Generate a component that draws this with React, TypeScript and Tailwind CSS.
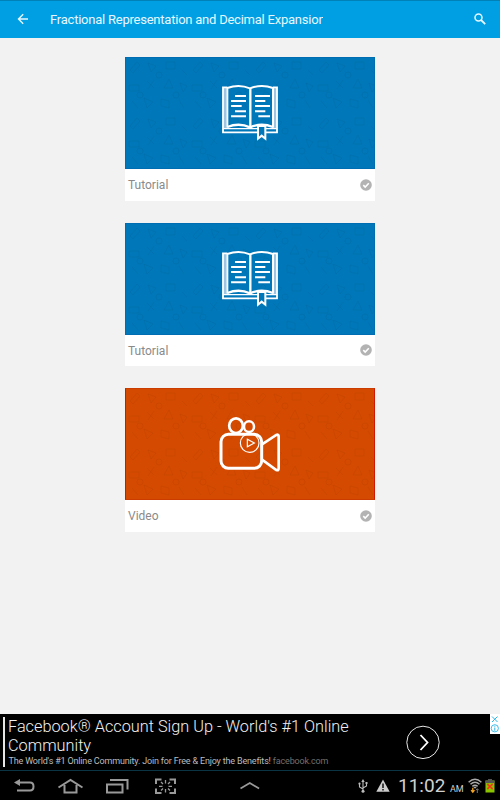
import { ReactNode } from "react";

type LessonKind = "tutorial" | "video";

interface Lesson {
  title: string;
  kind: LessonKind;
}

const lessons: Lesson[] = [
  { title: "Tutorial", kind: "tutorial" },
  { title: "Tutorial", kind: "tutorial" },
  { title: "Video", kind: "video" },
];

function BookIcon() {
  return (
    <svg viewBox="0 0 300 258" className="relative h-[86px] w-[100px]" fill="none" stroke="#fff">
      <path d="M75 53V176M225 53V176" stroke="#9dc6e2" strokeWidth="10" />
      <path d="M82 52H69V187H231V52H219" strokeWidth="5.5" />
      <path d="M69 176H231" strokeWidth="4" />
      <path d="M82 173V54Q117 41 150 55Q184 41 219 54V173" strokeWidth="6" />
      <path d="M82 171Q117 157 150 172Q184 157 219 171" strokeWidth="7" />
      <path d="M151 55V175" strokeWidth="7" />
      <path
        d="M105 78H138M93 93H138M93 108H125M105 124H138M93 139H138M165 78H210M165 93H196M165 108H210M165 124H196M175 139H210"
        strokeWidth="6"
      />
      <path d="M174 168H196V206L185 197L174 206Z" fill="#0077b8" strokeWidth="6" />
    </svg>
  );
}

function CameraIcon() {
  return (
    <svg viewBox="0 0 300 264" className="relative h-[88px] w-[100px]" fill="none" stroke="#fff">
      <ellipse cx="108" cy="77" rx="20.5" ry="22" strokeWidth="8" />
      <ellipse cx="147" cy="80" rx="15" ry="16" strokeWidth="7.5" />
      <rect x="63" y="103" width="122" height="102" rx="22" strokeWidth="9" />
      <path d="M186 133L229 105Q236 102 236 109V205Q236 213 229 210L186 179" strokeWidth="8" />
      <circle cx="149" cy="129" r="28" strokeWidth="3.5" />
      <path d="M142 118V140L163 129Z" strokeWidth="3.5" />
    </svg>
  );
}

// Faint school doodles behind the cover icon
function Doodles({ id }: { id: string }) {
  return (
    <svg className="absolute inset-0 h-full w-full" fill="none" stroke="#000" strokeOpacity="0.04">
      <defs>
        <pattern id={id} width="63" height="56" patternUnits="userSpaceOnUse">
          <path d="M4 12l7-8 3 3-7 8zM22 5l8 3-5 6zM40 4h9v7h-9zM56 12l5 5M3 27h10v6H3zM21 23l7 7M28 22l-6 9M38 30l5-9 4 9zM54 25l7 3-4 6zM6 43l6 7M18 40l9 4-6 6zM35 41l8 2v7l-8-2zM53 42l5 8" />
          <circle cx="33" cy="17" r="3" />
          <circle cx="14" cy="37" r="3" />
          <circle cx="50" cy="37" r="3" />
        </pattern>
      </defs>
      <rect width="100%" height="100%" fill={`url(#${id})`} stroke="none" />
    </svg>
  );
}

function LessonCard({ lesson, id }: { lesson: Lesson; id: string }) {
  const isVideo = lesson.kind === "video";
  return (
    <article className="w-[250px] bg-white">
      <div
        className={`relative flex h-28 items-center justify-center border ${
          isVideo ? "border-x-[#d01800] border-y-[#cb3c00] bg-[#d44a00]" : "border-[#006db2] bg-[#0077b8]"
        }`}
      >
        <Doodles id={id} />
        {isVideo ? <CameraIcon /> : <BookIcon />}
      </div>
      <div className="flex h-[31.5px] items-center justify-between pr-[3.5px] pl-[3px]">
        <span className="pt-px font-[Roboto,sans-serif] text-xs leading-4 text-[#8a8a8a]">{lesson.title}</span>
        <svg viewBox="0 0 12 12" className="size-3">
          <circle cx="6" cy="6" r="5.8" fill="#b3b3b3" />
          <path d="M3.3 6.1l1.9 1.9 3.6-3.7" fill="none" stroke="#fff" strokeWidth="1.6" />
        </svg>
      </div>
    </article>
  );
}

function NavIcon({ className, children }: { className?: string; children: ReactNode }) {
  return (
    <svg viewBox="0 0 26 18" className={`h-[18px] w-[26px] ${className ?? ""}`} fill="none" stroke="#999" strokeWidth="2">
      {children}
    </svg>
  );
}

function AdBanner() {
  return (
    <section className="flex h-14 bg-black font-[Roboto,sans-serif]">
      <div className="mt-[3px] ml-[3px] h-[50px] w-[2px] bg-[#e5e5e5]" />
      <div className="w-[380px] pt-[3px] pl-[3px] whitespace-nowrap">
        <h2 className="text-[16.3px] leading-[19px] font-light text-[#f0f0f0]">
          Facebook® Account Sign Up - World's #1 Online
          <br />
          Community
        </h2>
        <p className="pl-[0.5px] text-[9px] leading-[12px] tracking-[-0.17px] text-[#bdbdbd]">
          The World's #1 Online Community. Join for Free &amp; Enjoy the Benefits!{" "}
          <span className="text-[#707070]">facebook.com</span>
        </p>
      </div>
      <svg viewBox="0 0 36 36" className="mt-[10px] ml-[17px] size-9 shrink-0 translate-x-[3px]" fill="none" stroke="#fff">
        <circle cx="18" cy="18.4" r="16.2" strokeWidth="0.9" />
        <path d="M15.5 11l7 7.5-7 7.5" strokeWidth="1.8" />
      </svg>
      <svg viewBox="0 0 10 20" className="ml-auto h-5 w-[10px] bg-white" fill="none" stroke="#29b6e6">
        <path d="M2 2.5l5.5 5.5M7.5 2.5L2 8" />
        <circle cx="4.8" cy="14.3" r="3.6" strokeWidth="0.9" />
        <path d="M4.8 13.5v3.3M4.8 11.8v.9" />
      </svg>
    </section>
  );
}

function SystemBar() {
  return (
    <footer className="flex h-[30px] items-center border-t border-[#0a3443] bg-black pr-[5px] pl-[11px]">
      <NavIcon>
        <path d="M7 5.5h12q3.5 0 3.5 4t-3.5 4H6" />
        <path d="M3 5.5l6-3.5v7z" fill="#999" stroke="none" />
      </NavIcon>
      <NavIcon className="ml-5">
        <path d="M1.5 10.5L13.5 3l12 7.5M7.5 8v7.5h12V8" />
      </NavIcon>
      <NavIcon className="ml-[22px]">
        <path d="M2 7.5h15.5v8H2zM5 3h17.5v9.5" />
      </NavIcon>
      <NavIcon className="ml-[23px]">
        <path d="M2 7V2.5h5.5M15.5 2.5H21V7M21 11.5V16h-5.5M7.5 16H2v-4.5" />
        <path d="M11.5 3v3.5M11.5 12v3.5M5 9.3h3.5M14.5 9.3H18M7 5l2 2M16 5l-2 2M7 13.5l2-2M16 13.5l-2-2" strokeWidth="1.3" />
      </NavIcon>
      <NavIcon className="ml-[57px]">
        <path d="M3.5 11.5l9.3-5.5 9.3 5.5" strokeWidth="1.7" />
      </NavIcon>

      <div className="ml-auto flex items-center text-[#d0d0d0]">
        <svg viewBox="0 0 10 14" className="h-[14px] w-[10px]" fill="none" stroke="#bbb">
          <path d="M5 2v10M1.5 5v3L5 10M8.5 4.5V7L5 9" strokeWidth="1.1" />
          <path d="M3.3 3L5 0l1.7 3zM7.5 3h2v2h-2z" fill="#bbb" stroke="none" />
          <circle cx="1.5" cy="4.7" r="1.1" fill="#bbb" stroke="none" />
          <circle cx="5" cy="12.2" r="1.5" fill="#bbb" stroke="none" />
        </svg>
        <svg viewBox="0 0 14 13" className="ml-2 h-[13px] w-[14px]">
          <path d="M7 .5L13.7 12.7H.3z" fill="#ccc" />
          <path d="M7 4.5V9M7 10v1.6" stroke="#111" strokeWidth="1.5" />
        </svg>
        <span className="mt-px ml-2 w-12 font-[Roboto,sans-serif] text-[19px] leading-6 whitespace-nowrap">11:02</span>
        <span className="mt-[7px] ml-1 w-[14px] font-[Roboto,sans-serif] text-[9px] leading-3">AM</span>
        <svg viewBox="0 0 14 16" className="ml-[4px] h-4 w-[14px]" fill="none" stroke="#aaa">
          <path d="M.6 4.2Q7-1.7 13.4 4.2M2.5 6.3Q7 2.1 11.5 6.3M4.4 8.4Q7 6 9.6 8.4" strokeWidth="1.5" />
          <path d="M7 10.7L5.3 9Q7 7.8 8.7 9z" fill="#aaa" stroke="none" />
          <path d="M4.8 9.8v4M3.1 12.2l1.7 2 1.7-2" stroke="#f5a623" strokeWidth="1.3" />
          <path d="M9.3 15v-4M7.9 12.2l1.4-1.5 1.4 1.5" stroke="#777" />
        </svg>
        <svg viewBox="0 0 10 14" className="ml-[3px] h-[14px] w-[10px]">
          <path d="M3 0h4v1.5h2.5v12h-9v-12H3z" fill="#8ac400" />
          <path d="M3 0h4v1.5h2.5V4h-9V1.5H3z" fill="#555" />
          <path d="M2.3 4.8l5.4 5.4M7.7 4.8l-5.4 5.4" stroke="#f13a1a" strokeWidth="1.8" />
        </svg>
      </div>
    </footer>
  );
}

export default function App() {
  return (
    <div className="flex h-[800px] w-[500px] flex-col overflow-hidden bg-[#f2f2f2]">
      <header className="flex h-[38px] items-center border-t border-[#0082b8] bg-[#009fe3] pr-[14px] pl-[17px]">
        <svg viewBox="0 0 12 12" className="mb-px size-3" fill="none" stroke="#e8f7ff" strokeWidth="1.4">
          <path d="M11 6H1.7M6.2 1.3L1.5 6l4.7 4.7" />
        </svg>
        <h1 className="ml-[21px] w-[272.5px] overflow-hidden font-[Roboto,sans-serif] text-[13px] leading-5 tracking-[-0.23px] whitespace-nowrap text-[#e8f7ff]">
          Fractional Representation and Decimal Expansion
        </h1>
        <svg viewBox="0 0 12 12" className="mb-[2px] ml-auto size-3" fill="none" stroke="#e8f7ff">
          <circle cx="4.5" cy="4.5" r="3.5" strokeWidth="1.5" />
          <path d="M7 7l4.2 4.2" strokeWidth="1.8" />
        </svg>
      </header>

      <main className="flex flex-1 flex-col items-center gap-[22px] pt-[19px]">
        {lessons.map((lesson, index) => (
          <LessonCard key={index} lesson={lesson} id={`doodles-${index}`} />
        ))}
      </main>

      <AdBanner />
      <SystemBar />
    </div>
  );
}
